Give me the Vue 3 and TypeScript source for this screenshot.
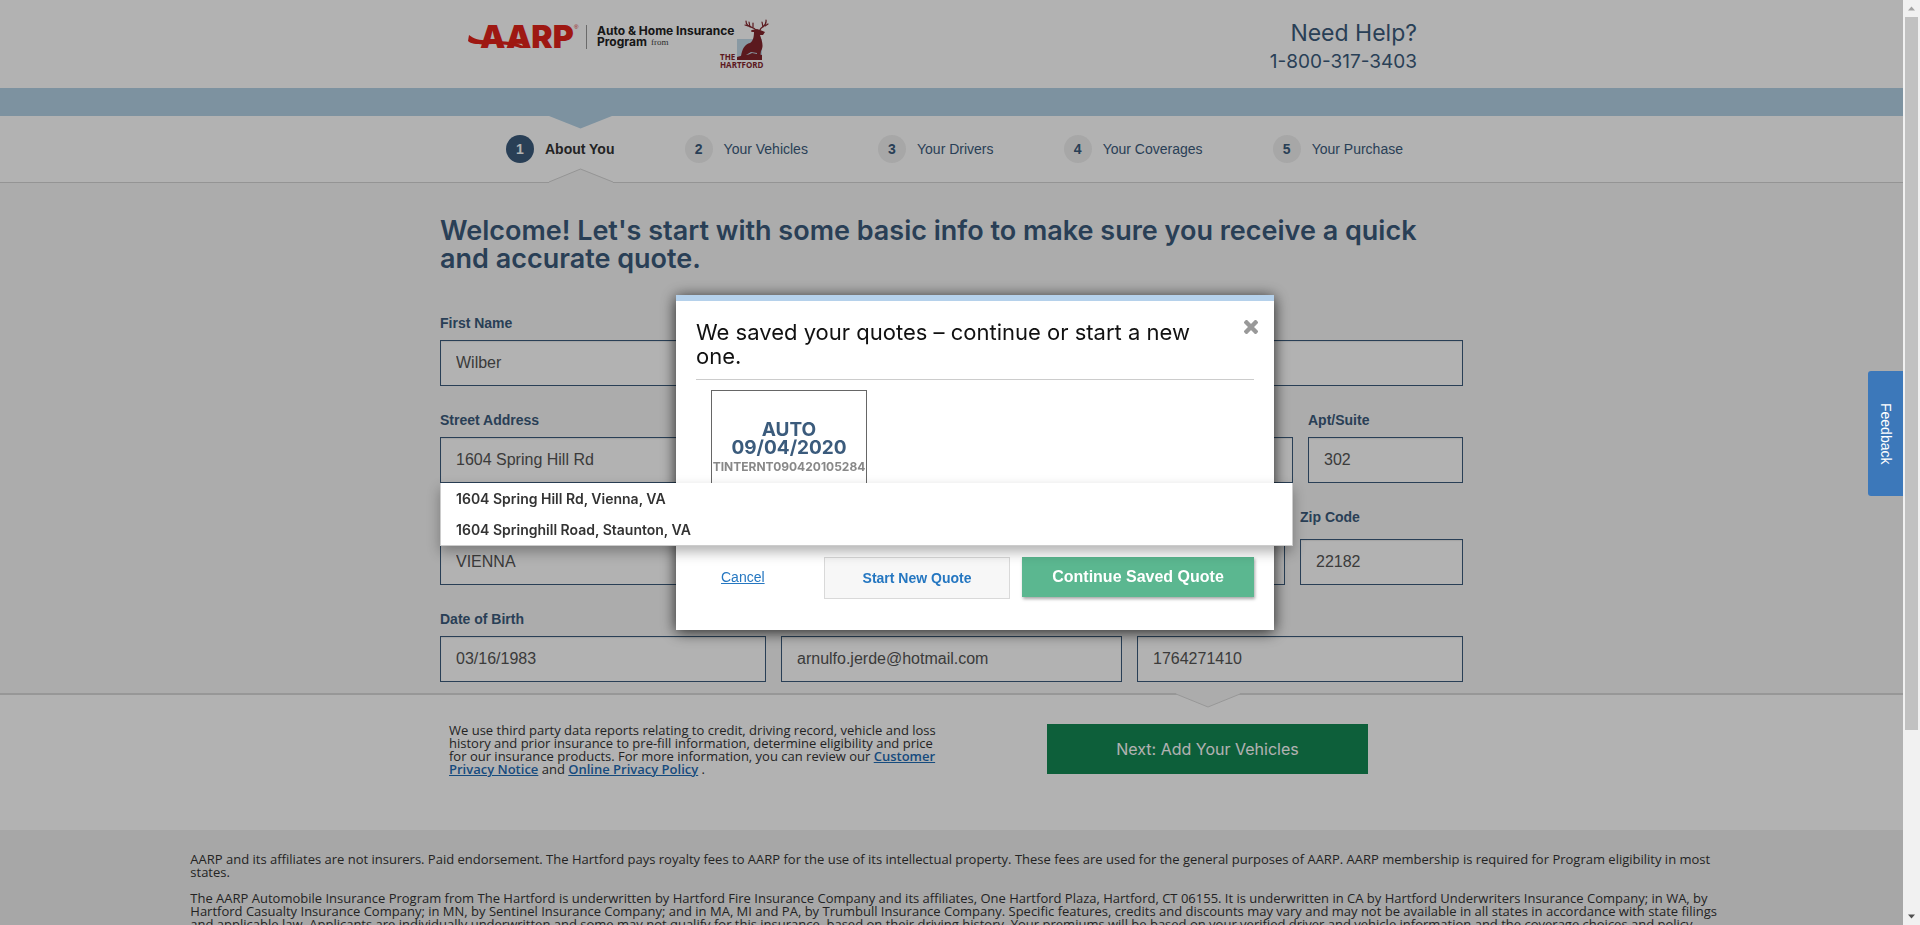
<script setup lang="ts">
import { ref } from 'vue'

interface Step {
  label: string
  active: boolean
}

const steps: Step[] = [
  { label: 'About You', active: true },
  { label: 'Your Vehicles', active: false },
  { label: 'Your Drivers', active: false },
  { label: 'Your Coverages', active: false },
  { label: 'Your Purchase', active: false },
]

const form = ref({
  firstName: 'Wilber',
  lastName: '',
  street: '1604 Spring Hill Rd',
  apt: '302',
  city: 'VIENNA',
  state: '',
  zip: '22182',
  birth: '03/16/1983',
  email: 'arnulfo.jerde@hotmail.com',
  phone: '1764271410',
})

const suggestions: string[] = [
  '1604 Spring Hill Rd, Vienna, VA',
  '1604 Springhill Road, Staunton, VA',
]

const legal: string[][] = [
  [
    'AARP and its affiliates are not insurers. Paid endorsement. The Hartford pays royalty fees to AARP for the use of its intellectual property. These fees are used for the general purposes of AARP. AARP membership is required for Program eligibility in most',
    'states.',
  ],
  [
    'The AARP Automobile Insurance Program from The Hartford is underwritten by Hartford Fire Insurance Company and its affiliates, One Hartford Plaza, Hartford, CT 06155. It is underwritten in CA by Hartford Underwriters Insurance Company; in WA, by',
    'Hartford Casualty Insurance Company; in MN, by Sentinel Insurance Company; and in MA, MI and PA, by Trumbull Insurance Company. Specific features, credits and discounts may vary and may not be available in all states in accordance with state filings',
    'and applicable law. Applicants are individually underwritten and some may not qualify for this insurance, based on their driving history. Your premiums will be based on your verified driver and vehicle information and the coverage choices and policy',
  ],
]
</script>

<template>
  <div class="page">
    <header class="header">
      <div class="wrap header-inner">
        <svg class="logo" width="310" height="60" viewBox="0 0 310 60" role="img" aria-label="AARP Auto &amp; Home Insurance Program from The Hartford">
          <text x="14" y="34" class="logo-aarp">AARP</text>
          <path d="M3 21 C9 26 18 27 27 26 L40 30 C28 29 8 33 2 27 Z" fill="#e2231a" />
          <path d="M26 28 C32 27 42 27 50 29 L62 34 L54 34 C46 31 36 30 26 30 Z" fill="#e2231a" />
          <text x="108" y="15" class="logo-reg">®</text>
          <rect x="120" y="11" width="1" height="24" fill="#999" />
          <text x="131" y="21" class="logo-name">Auto &amp; Home Insurance</text>
          <text x="131" y="32" class="logo-name">Program</text>
          <text x="185" y="31" class="logo-from">from</text>
          <rect x="271" y="25" width="25" height="21" fill="#c4dcea" />
          <path d="M271 46 V43 L278 41 C282 41 284 40 286 39 L296 41 V46 Z" fill="#83252c" />
          <path d="M275 42 C276 35 279 30 284 29 C287 27 288 23 288 18 C285 18 284 17 286 16 L291 15 L294 16 L299 18 L297 21 L294 21 C296 27 298 32 295 37 L294 44 H291 V39 L285 38 L280 41 L279 44 H276 Z" fill="#83252c" />
          <g fill="none" stroke="#83252c" stroke-width="1.2" stroke-linecap="round">
            <path d="M290 16 C287 12 280 14 280 7" />
            <path d="M284 13 L283 8 M287 13 L287 9 M282 12 L279 11" />
            <path d="M294 16 C295 12 301 13 300 6" />
            <path d="M297 13 L296 8 M299 12 L302 10" />
          </g>
          <text x="254" y="46" class="logo-hartford">THE</text>
          <text x="254" y="54" class="logo-hartford">HARTFORD</text>
        </svg>
        <div class="help">
          <div class="help-title">Need Help?</div>
          <div class="help-phone">1-800-317-3403</div>
        </div>
      </div>
    </header>

    <div class="band"></div>

    <nav class="steps" aria-label="Quote progress">
      <div class="wrap steps-wrap">
        <svg class="arrow-top" width="64" height="13" viewBox="0 0 64 13" aria-hidden="true">
          <path d="M0 0 H63 L31.500 12.500 Z" fill="#b3d2e6" />
        </svg>
        <svg class="arrow-bottom" width="64" height="15" viewBox="0 0 64 15" aria-hidden="true">
          <path d="M0 14 L31.500 1 L64 14 V15 H0 Z" fill="#f6f6f6" />
          <path d="M0 14 L31.500 1 L64 14" fill="none" stroke="#d4d4d4" />
        </svg>
        <ol class="step-list">
          <li v-for="(step, i) in steps" :key="step.label" class="step" :class="{ active: step.active }">
            <span class="step-num">{{ i + 1 }}</span>
            <a href="#" class="step-label">{{ step.label }}</a>
          </li>
        </ol>
      </div>
    </nav>

    <main class="content">
      <form class="wrap" @submit.prevent>
        <h1 class="title">
          Welcome! Let's start with some basic info to make sure you receive a quick<br />
          and accurate quote.
        </h1>
        <div class="row row-name">
          <div class="field">
            <label for="first">First Name</label>
            <input id="first" v-model="form.firstName" type="text" />
          </div>
          <div class="field">
            <label for="last">Last Name</label>
            <input id="last" v-model="form.lastName" type="text" />
          </div>
        </div>
        <div class="row row-street">
          <div class="field">
            <label for="street">Street Address</label>
            <input id="street" v-model="form.street" type="text" autocomplete="off" />
            <ul class="suggestions">
              <li v-for="s in suggestions" :key="s">{{ s }}</li>
            </ul>
          </div>
          <div class="field">
            <label for="apt">Apt/Suite</label>
            <input id="apt" v-model="form.apt" type="text" />
          </div>
        </div>
        <div class="row row-city">
          <div class="field">
            <label for="city">City</label>
            <input id="city" v-model="form.city" type="text" />
          </div>
          <div class="field">
            <label for="state">State</label>
            <input id="state" v-model="form.state" type="text" />
          </div>
          <div class="field">
            <label for="zip">Zip Code</label>
            <input id="zip" v-model="form.zip" type="text" />
          </div>
        </div>
        <div class="row row-contact">
          <div class="field">
            <label for="birth">Date of Birth</label>
            <input id="birth" v-model="form.birth" type="text" />
          </div>
          <div class="field">
            <label for="email">Email</label>
            <input id="email" v-model="form.email" type="email" />
          </div>
          <div class="field">
            <label for="phone">Phone</label>
            <input id="phone" v-model="form.phone" type="tel" />
          </div>
        </div>
      </form>
    </main>

    <section class="next">
      <div class="wrap next-inner">
        <svg class="notch" width="64" height="15" viewBox="0 0 64 15" aria-hidden="true">
          <path d="M0 0 H64 V1 L32 14 L0 1 Z" fill="#f6f6f6" />
          <path d="M0 1 L32 14 L64 1" fill="none" stroke="#d9d9d9" />
        </svg>
        <p class="disclosure">
          We use third party data reports relating to credit, driving record, vehicle and loss<br />
          history and prior insurance to pre-fill information, determine eligibility and price<br />
          for our insurance products. For more information, you can review our <a href="#">Customer<br />
          Privacy Notice</a> and <a href="#">Online Privacy Policy</a> .
        </p>
        <button type="button" class="next-button">Next: Add Your Vehicles</button>
      </div>
    </section>

    <footer class="legal">
      <div class="legal-inner">
        <p v-for="(lines, i) in legal" :key="i">
          <span v-for="line in lines" :key="line">{{ line }}</span>
        </p>
      </div>
    </footer>

    <div class="overlay">
      <div class="modal" role="dialog" aria-modal="true" aria-labelledby="modal-title">
        <button type="button" class="close" aria-label="Close">
          <svg width="14" height="14" viewBox="0 0 14 14" aria-hidden="true">
            <path d="M2.500 2.500 L11.500 11.500 M11.500 2.500 L2.500 11.500" stroke="#999" stroke-width="4.400" stroke-linecap="square" stroke-linejoin="round" />
          </svg>
        </button>
        <h2 id="modal-title" class="modal-title">We saved your quotes – continue or start a new one.</h2>
        <button type="button" class="card">
          <span class="card-name">AUTO</span>
          <span class="card-name">09/04/2020</span>
          <span class="card-id">TINTERNT090420105284</span>
        </button>
        <div class="actions">
          <a href="#" class="cancel">Cancel</a>
          <button type="button" class="start">Start New Quote</button>
          <button type="button" class="continue">Continue Saved Quote</button>
        </div>
      </div>
    </div>

    <button type="button" class="feedback"><span>Feedback</span></button>

    <div class="scrollbar" aria-hidden="true">
      <svg width="17" height="17" viewBox="0 0 17 17"><path d="M5 10.500 H12 L8.500 6.500 Z" fill="#a3a3a3" /></svg>
      <div class="track"><div class="thumb"></div></div>
      <svg width="17" height="17" viewBox="0 0 17 17"><path d="M5 6.500 H12 L8.500 10.500 Z" fill="#505050" /></svg>
    </div>
  </div>
</template>

<style>
body {
  margin: 0;
}
</style>

<style scoped>
* {
  box-sizing: border-box;
}

.page {
  height: 100vh;
  overflow: hidden;
  padding-right: 17px;
  background: #f0f0f0;
  color: #333;
  font-family: Inter, "Open Sans", sans-serif;
}

.wrap {
  position: relative;
  width: 100%;
  max-width: 1023px;
  margin: 0 auto;
}

.header {
  background: #fff;
}

.header-inner {
  display: flex;
  justify-content: space-between;
  height: 88px;
  padding: 14px 46px 0 26px;
}

.logo-aarp {
  font: 900 32px Inter, sans-serif;
  fill: #e2231a;
}

.logo-reg {
  font: 6px "Liberation Sans", sans-serif;
  fill: #e2231a;
}

.logo-name {
  font: 700 12px Inter, sans-serif;
  fill: #222;
}

.logo-from {
  font: 9px "Liberation Serif", serif;
  fill: #444;
}

.logo-hartford {
  font: 700 8px "Open Sans", sans-serif;
  fill: #83252c;
}

.help {
  padding-top: 5px;
  color: #3b5b7c;
  text-align: right;
}

.help-title {
  font-size: 23px;
  line-height: 28px;
}

.help-phone {
  font-size: 19px;
  line-height: 30px;
}

.band {
  height: 28px;
  background: #b3d2e6;
}

.steps {
  border-bottom: 1px solid #d4d4d4;
  background: #fff;
}

.arrow-top {
  position: absolute;
  top: 0;
  left: 109px;
}

.arrow-bottom {
  position: absolute;
  bottom: -1px;
  left: 109px;
}

.step-list {
  display: flex;
  align-items: center;
  justify-content: space-between;
  height: 66px;
  margin: 0;
  padding: 0 60px 0 66px;
  list-style: none;
  font: 14px "Liberation Sans", Arial, sans-serif;
}

.step {
  display: flex;
  align-items: center;
  gap: 11px;
}

.step-num {
  width: 28px;
  border-radius: 50%;
  background: #f0f0f0;
  color: #3b5b7c;
  font-weight: 700;
  line-height: 28px;
  text-align: center;
}

.step-label {
  color: #3b5b7c;
  text-decoration: none;
}

.active .step-num {
  background: #3b5b7c;
  color: #fff;
}

.active .step-label {
  color: #333;
  font-weight: 700;
}

.content {
  padding: 34px 0 11px;
  background: #f6f6f6;
}

.title {
  margin: 0 0 42px;
  color: #3b5b7c;
  font-size: 27px;
  font-weight: 600;
  line-height: 28px;
  white-space: nowrap;
}

.row {
  display: grid;
  gap: 15px;
  margin-top: 26px;
}

.row-name {
  grid-template-columns: 1fr 1fr;
}

.row-street {
  grid-template-columns: 853fr 155fr;
}

.row-city {
  grid-template-columns: 553fr 277fr 163fr;
}

.row-contact {
  grid-template-columns: 326fr 341fr 326fr;
}

.field {
  position: relative;
  display: flex;
  flex-direction: column;
  gap: 9px;
  min-width: 0;
}

.row-city .field {
  gap: 14px;
}

label {
  color: #3b5b7c;
  font: 700 14px/16px "Liberation Sans", Arial, sans-serif;
}

input {
  width: 100%;
  height: 46px;
  padding: 0 15px;
  border: 1px solid #3b5b7c;
  border-radius: 0;
  background: #fff;
  box-shadow: inset 0 1px 1px rgba(0, 0, 0, 0.08);
  color: #555;
  font: 16px "Liberation Sans", Arial, sans-serif;
}

.suggestions {
  position: absolute;
  top: 100%;
  right: 0;
  left: 0;
  z-index: 20;
  margin: 0;
  padding: 0;
  border: 1px solid #ccc;
  border-top: 0;
  background: #fff;
  box-shadow: 0 6px 12px rgba(0, 0, 0, 0.3);
  color: #333;
  font-size: 14px;
  font-weight: 600;
  line-height: 31px;
  list-style: none;
}

.suggestions li {
  padding: 0 15px;
}

.next {
  height: 137px;
  border-top: 2px solid #d9d9d9;
  background: #fff;
}

.next-inner {
  display: flex;
  align-items: flex-start;
  justify-content: space-between;
  padding: 29px 95px 0 9px;
}

.notch {
  position: absolute;
  top: -2px;
  right: 223px;
}

.disclosure {
  margin: 0;
  font: 13px/13px "Open Sans", sans-serif;
  white-space: nowrap;
}

.disclosure a {
  color: #1f6cb5;
  font-weight: 600;
}

.next-button {
  width: 321px;
  height: 50px;
  border: 0;
  background: #138854;
  color: #fff;
  font: 16px Inter, sans-serif;
}

.legal {
  padding: 23px 0 0;
}

.legal-inner {
  width: 80%;
  margin: 0 auto;
  font: 13px/13px "Open Sans", sans-serif;
}

.legal p {
  margin: 0 0 13px;
}

.legal span {
  display: block;
  white-space: nowrap;
}

.overlay {
  position: fixed;
  inset: 0 17px 0 0;
  z-index: 10;
  display: flex;
  align-items: center;
  justify-content: center;
  padding-left: 47px;
  background: rgba(0, 0, 0, 0.3);
}

.modal {
  position: relative;
  width: 598px;
  padding: 19px 20px 31px;
  border-top: 6px solid #b5d1eb;
  background: #fff;
  box-shadow: 0 2px 14px rgba(0, 0, 0, 0.8);
}

.close {
  position: absolute;
  top: 19px;
  right: 16px;
  display: flex;
  padding: 0;
  border: 0;
  background: none;
}

.modal-title {
  margin: 0;
  padding: 0 40px 11px 0;
  border-bottom: 1px solid #ccc;
  color: #111;
  font-size: 22px;
  font-weight: 400;
  line-height: 24px;
}

.card {
  display: flex;
  flex-direction: column;
  align-items: center;
  width: 156px;
  height: 150px;
  margin: 10px 0 17px 15px;
  padding: 30px 0 0;
  border: 1px solid #666;
  background: #fff;
  font-family: Inter, sans-serif;
  font-weight: 700;
}

.card-name {
  color: #3b5b7c;
  font-size: 19px;
  line-height: 18px;
}

.card-id {
  margin-top: 3px;
  color: #888;
  font-size: 12px;
  line-height: 14px;
}

.actions {
  display: flex;
  align-items: flex-start;
  gap: 12px;
  font-family: "Liberation Sans", Arial, sans-serif;
}

.cancel {
  margin: 12px auto 0 25px;
  color: #2577c1;
  font-size: 14px;
  line-height: 16px;
}

.start {
  width: 186px;
  height: 42px;
  border: 1px solid #d9d9d9;
  background: #f7f7f7;
  color: #2577c1;
  font: 700 14px "Liberation Sans", Arial, sans-serif;
}

.continue {
  width: 232px;
  height: 40px;
  border: 0;
  background: #5bb790;
  box-shadow: 1px 2px 3px rgba(0, 0, 0, 0.35);
  color: #fff;
  font: 700 16px "Liberation Sans", Arial, sans-serif;
}

.feedback {
  position: fixed;
  top: 371px;
  right: 17px;
  z-index: 15;
  display: flex;
  align-items: center;
  justify-content: center;
  width: 35px;
  height: 125px;
  padding: 0;
  border: 0;
  border-radius: 3px 0 0 3px;
  background: #3c78ba;
  color: #fff;
  font: 14px "Liberation Sans", Arial, sans-serif;
}

.feedback span {
  writing-mode: vertical-rl;
}

.scrollbar {
  position: fixed;
  inset: 0 0 0 auto;
  z-index: 15;
  display: flex;
  flex-direction: column;
  width: 17px;
  background: #f1f1f1;
}

.track {
  flex: 1;
  padding: 0 2px;
}

.thumb {
  height: 80%;
  background: #c1c1c1;
}
</style>
